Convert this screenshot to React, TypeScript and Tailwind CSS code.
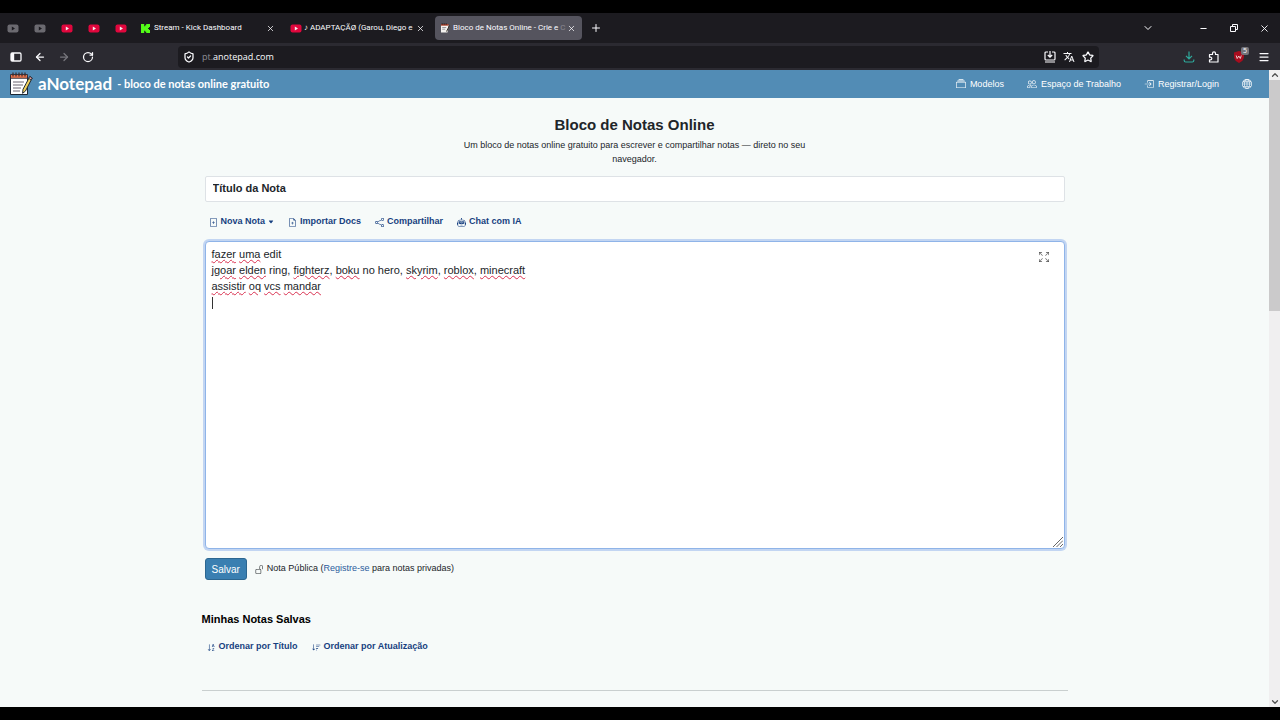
import type { ReactNode } from "react";
import {
  BsArrowsFullscreen,
  BsBoxArrowInRight,
  BsCaretDownFill,
  BsCollection,
  BsFileEarmarkPlus,
  BsFilePlus,
  BsGlobe,
  BsPeople,
  BsRobot,
  BsShare,
  BsSortAlphaDown,
  BsSortDown,
  BsUnlock,
} from "react-icons/bs";
import { MdTranslate } from "react-icons/md";
import {
  ArrowLeft,
  ArrowRight,
  ChevronDown,
  ChevronUp,
  Menu,
  Minus,
  Plus,
  RotateCw,
  ShieldCheck,
  Star,
  X,
} from "lucide-react";

type NoteWord = { text: string; misspelled?: boolean };

const bad = (text: string): NoteWord => ({ text, misspelled: true });
const ok = (text: string): NoteWord => ({ text });

const noteWords: NoteWord[] = [
  bad("fazer"), ok(" "), bad("uma"), ok(" edit\n"),
  bad("jgoar"), ok(" "), bad("elden"), ok(" ring, "), bad("fighterz"), ok(", "),
  bad("boku"), ok(" no hero, "), bad("skyrim"), ok(", "), bad("roblox"), ok(", "), bad("minecraft"), ok("\n"),
  bad("assistir"), ok(" "), bad("oq"), ok(" "), bad("vcs"), ok(" "), bad("mandar"), ok("\n"),
];

const noteText = noteWords.map((word) => word.text).join("");

const pinnedTabs = [
  { id: 1, color: "text-[#6b6a70]", arrow: "#1c1b20" },
  { id: 2, color: "text-[#6b6a70]", arrow: "#1c1b20" },
  { id: 3, color: "text-[#e0073d]" },
  { id: 4, color: "text-[#e0073d]" },
  { id: 5, color: "text-[#e0073d]" },
];

function YoutubeIcon({ className = "", arrow = "#f4e9ec" }: { className?: string; arrow?: string }) {
  return (
    <svg viewBox="0 0 12 9" className={`h-[9px] w-3 shrink-0 ${className}`} aria-hidden="true">
      <rect x=".5" y=".5" width="11" height="8" rx="2" fill="currentColor" />
      <path d="M4.8 2.6 8 4.5 4.8 6.4Z" fill={arrow} />
    </svg>
  );
}

function KickIcon() {
  return (
    <svg viewBox="0 0 9 9" className="size-[9px] shrink-0" aria-hidden="true">
      <path d="M0 0h3.2v2.200h1V1.200h1V0H9v3H8v1H7v1h1v1h1v3H5.200V7.800h-1v-1h-1V9H0Z" fill="#53fc18" />
    </svg>
  );
}

function NotepadIcon({ className = "" }: { className?: string }) {
  return (
    <svg viewBox="0 0 24 24" className={`shrink-0 ${className}`} aria-hidden="true">
      <path d="M1.500 4h17v18.500h-17Z" fill="#fff" stroke="#1d2733" strokeWidth="1" />
      <path d="M1.500 2.500h17v3.800h-17Z" fill="#e8754e" stroke="#1d2733" strokeWidth="0.800" />
      <path d="M4 .5v4M7 .5v4M10 .5v4M13 .5v4M16 .5v4" stroke="#3a2b2b" strokeWidth="1.200" />
      <path d="M4 10h11M4 13h10M4 16h8M4 19h7" stroke="#6b6570" strokeWidth="1.100" />
      <path d="m20.800 4.500 2.400 1.500-6.700 13-2.900 2.300.4-4Z" fill="#f3d25c" stroke="#1d2733" strokeWidth="1" />
      <path d="m20.800 4.500 2.400 1.500-1 1.900-2.500-1.500Z" fill="#e9a2a2" stroke="#1d2733" strokeWidth=".8" />
    </svg>
  );
}

function NotepadFavicon() {
  return (
    <svg viewBox="0 0 10 10" className="size-[10px] shrink-0" aria-hidden="true">
      <path d="M1 2h7.500L7.500 9.500H1Z" fill="#f5f3f0" />
      <path d="M1 1h7.500v1.700H1Z" fill="#a8432f" />
      <path d="M2.200 0v2M4.200 0v2M6.200 0v2" stroke="#2a1f1f" strokeWidth=".7" />
      <path d="M2.200 4.500h4M2.200 6.200h3" stroke="#77727a" strokeWidth=".7" />
      <path d="m9.500 2.500-3 6" stroke="#3a342a" strokeWidth="1" />
    </svg>
  );
}

function SidebarIcon() {
  return (
    <svg viewBox="0 0 12 10" className="h-[10px] w-3" aria-hidden="true">
      <rect x="1" y="1" width="10" height="8" rx="1.200" fill="none" stroke="currentColor" strokeWidth="1.300" />
      <path d="M1 1h3.200v8H1Z" fill="currentColor" />
    </svg>
  );
}

function InstallIcon() {
  return (
    <svg viewBox="0 0 12 12" className="size-3" fill="none" stroke="currentColor" strokeWidth="1.200" aria-hidden="true">
      <path d="M4 1H2a1 1 0 0 0-1 1v6a1 1 0 0 0 1 1h8a1 1 0 0 0 1-1V2a1 1 0 0 0-1-1H8M1 11h10M6 0v6M3.800 4 6 6.200 8.200 4" />
    </svg>
  );
}

function DownloadIcon() {
  return (
    <svg viewBox="0 0 12 12" className="size-3" fill="none" stroke="currentColor" strokeWidth="1.200" aria-hidden="true">
      <path d="M6 .5v7M3 4.800l3 3 3-3M1.200 8.500v1a1.500 1.500 0 0 0 1.500 1.500h6.600a1.500 1.500 0 0 0 1.500-1.500v-1" />
    </svg>
  );
}

function ExtensionIcon() {
  return (
    <svg viewBox="0 0 12 12" className="size-3" fill="none" stroke="currentColor" strokeWidth="1.200" strokeLinejoin="round" aria-hidden="true">
      <path d="M1.500 3.500h3V2.300a1.500 1.500 0 0 1 3 0v1.200h2.500v7.500h-8.500V8.800h1a1.300 1.300 0 0 0 0-2.600h-1Z" />
    </svg>
  );
}

function RestoreIcon() {
  return (
    <svg viewBox="0 0 8 8" className="size-2" fill="none" stroke="currentColor" aria-hidden="true">
      <path d="M.5 2.500h5v5h-5ZM2.500 2.500v-2h5v5h-2" />
    </svg>
  );
}

function ShieldBadgeIcon() {
  return (
    <svg viewBox="0 0 12 12" className="size-3" aria-hidden="true">
      <path d="M6 0 11 1.500v4C11 8.500 9 10.700 6 12 3 10.700 1 8.500 1 5.500v-4Z" fill="#a80d1e" />
      <path d="m3.200 4.500 1 3 1.600-2.500 1.500 2.500 1-3" fill="none" stroke="#f3dede" strokeWidth=".9" />
    </svg>
  );
}

function IconButton({ label, className = "", children }: { label: string; className?: string; children: ReactNode }) {
  return (
    <button type="button" aria-label={label} className={`flex shrink-0 items-center justify-center ${className}`}>
      {children}
    </button>
  );
}

function TabBar() {
  return (
    <div className="flex h-[30px] shrink-0 items-center bg-[#1c1b20] pl-[7px] font-[Roboto,'Noto_Sans',sans-serif] text-[8px] text-[#fbfbfe]">
      <div className="flex gap-[15px]">
        {pinnedTabs.map((tab) => (
          <IconButton key={tab.id} label="YouTube" className={tab.color}>
            <YoutubeIcon arrow={tab.arrow} />
          </IconButton>
        ))}
      </div>
      <div className="ml-[14px] flex w-[134px] items-center gap-1">
        <KickIcon />
        <span className="flex-1 whitespace-nowrap">Stream - Kick Dashboard</span>
        <IconButton label="Fechar aba"><X size={9} /></IconButton>
      </div>
      <div className="ml-[15px] flex w-[135px] items-center gap-[2px]">
        <YoutubeIcon className="text-[#e0073d]" />
        <span className="min-w-0 flex-1 whitespace-nowrap">♪ ADAPTAÇÃØ (Garou, Diego e</span>
        <IconButton label="Fechar aba"><X size={9} /></IconButton>
      </div>
      <div className="ml-[10px] flex h-6 w-[147px] items-center gap-[3px] rounded bg-[#55545e] pr-[6px] pl-[5px]">
        <NotepadFavicon />
        <span className="min-w-0 flex-1 whitespace-nowrap">
          Bloco de Notas Online - Crie e <span className="text-[#8a8992]">C</span>
        </span>
        <IconButton label="Fechar aba"><X size={9} /></IconButton>
      </div>
      <IconButton label="Nova aba" className="ml-2"><Plus size={12} /></IconButton>
      <div className="ml-auto flex items-center">
        <IconButton label="Listar abas" className="w-10"><ChevronDown size={12} /></IconButton>
        <IconButton label="Minimizar" className="ml-5 w-[30px]"><Minus size={9} strokeWidth={3} /></IconButton>
        <IconButton label="Restaurar" className="w-[31px]"><RestoreIcon /></IconButton>
        <IconButton label="Fechar" className="w-[31px]"><X size={11} /></IconButton>
      </div>
    </div>
  );
}

function Toolbar() {
  return (
    <div className="flex h-[27px] shrink-0 items-center bg-[#2b2a31] px-[10px] font-['Open_Sans','Noto_Sans',sans-serif] text-[9px] text-[#fbfbfe]">
      <div className="flex items-center gap-3">
        <IconButton label="Barra lateral"><SidebarIcon /></IconButton>
        <IconButton label="Voltar"><ArrowLeft size={12} strokeWidth={2.5} /></IconButton>
        <IconButton label="Avançar" className="text-[#77767d]"><ArrowRight size={12} strokeWidth={2.5} /></IconButton>
        <IconButton label="Recarregar"><RotateCw size={12} strokeWidth={2.5} /></IconButton>
      </div>
      <div className="ml-[84px] flex h-[22px] flex-1 items-center rounded bg-[#1c1b20] px-[5px]">
        <ShieldCheck size={12} strokeWidth={2.5} className="shrink-0" />
        <span className="ml-[7px] flex-1">
          <span className="text-[#8f8e96]">pt.</span>anotepad.com
        </span>
        <div className="flex items-center gap-[7px]">
          <IconButton label="Instalar"><InstallIcon /></IconButton>
          <IconButton label="Traduzir"><MdTranslate size={12} /></IconButton>
          <IconButton label="Favoritar"><Star size={12} strokeWidth={2.5} /></IconButton>
        </div>
      </div>
      <div className="ml-[84px] flex items-center gap-[13px]">
        <IconButton label="Downloads" className="text-[#2fa99c]"><DownloadIcon /></IconButton>
        <IconButton label="Extensões"><ExtensionIcon /></IconButton>
        <IconButton label="Bloqueador" className="relative">
          <ShieldBadgeIcon />
          <span className="absolute -top-1 -right-1 w-2 rounded-xs bg-[#75747a] text-[7px] leading-[8px]">5</span>
        </IconButton>
        <IconButton label="Menu"><Menu size={12} strokeWidth={2.5} /></IconButton>
      </div>
    </div>
  );
}

function SiteHeader() {
  return (
    <header className="flex h-7 items-center bg-[#528cb5] pr-[17px] pl-[9px] text-white">
      <a href="#" className="flex items-center gap-[5px] font-[Lato,sans-serif] font-bold">
        <NotepadIcon className="size-6" />
        <span className="text-[17px] leading-6">aNotepad</span>
        <span className="text-[11px] leading-6">- bloco de notas online gratuito</span>
      </a>
      <nav className="ml-auto flex items-center gap-[23px] text-[9px] leading-4">
        <a href="#" className="flex items-center gap-1"><BsCollection size={10} />Modelos</a>
        <a href="#" className="flex items-center gap-1"><BsPeople size={10} />Espaço de Trabalho</a>
        <a href="#" className="flex items-center gap-1"><BsBoxArrowInRight size={10} />Registrar/Login</a>
        <a href="#" aria-label="Idioma"><BsGlobe size={10} /></a>
      </nav>
    </header>
  );
}

function NoteEditor() {
  return (
    <div className="relative mt-[11px] h-[308px] rounded-[4px] border border-[#8fb4e8] bg-white ring-2 ring-[#c2d5f2]">
      {/* spelling marks and caret, drawn under the text */}
      <div aria-hidden="true" className="absolute inset-0 px-[6px] py-1 text-[11px] leading-4 whitespace-pre-wrap text-transparent">
        {noteWords.map((word, i) => (
          <span
            key={i}
            className={word.misspelled ? "underline decoration-[#d9304f] decoration-wavy decoration-1 underline-offset-1" : ""}
          >
            {word.text}
          </span>
        ))}
        <span className="inline-block h-3 w-px bg-[#333] align-middle" />
      </div>
      <textarea
        aria-label="Conteúdo da nota"
        spellCheck={false}
        defaultValue={noteText}
        className="relative block size-full resize-none bg-transparent px-[6px] py-1 text-[11px] leading-4 text-[#212529] outline-none"
      />
      <IconButton label="Tela cheia" className="absolute top-[10px] right-[15px] text-[#555]">
        <BsArrowsFullscreen size={10} />
      </IconButton>
      <svg viewBox="0 0 10 10" className="absolute right-px bottom-px size-[10px]" stroke="#555" strokeWidth=".9" aria-hidden="true">
        <path d="M0 10 10 0M3.500 10 10 3.500M7 10l3-3" />
      </svg>
    </div>
  );
}

function NotePage() {
  const action = "flex items-center gap-[3px]";

  return (
    <main className="mx-auto w-full max-w-[866px] text-[9px] text-[#212529]">
      <div className="pt-[19px] text-center">
        <h1 className="text-[15px] leading-4 font-bold">Bloco de Notas Online</h1>
        <p className="mx-auto mt-[5px] max-w-[380px] leading-[14px]">
          Um bloco de notas online gratuito para escrever e compartilhar notas — direto no seu navegador.
        </p>
      </div>
      <div className="px-[3px]">
        <input
          aria-label="Título da Nota"
          defaultValue="Título da Nota"
          className="mt-[10px] block h-[26px] w-full rounded-xs border border-[#dee2e6] bg-white px-[7px] pb-[2px] text-[11px] font-bold"
        />
        <div className="mt-3 flex h-4 items-center gap-[14px] px-1 font-bold text-[#163f80]">
          <button type="button" className={action}><BsFilePlus size={9} />Nova Nota<BsCaretDownFill size={6} /></button>
          <button type="button" className={action}><BsFileEarmarkPlus size={9} />Importar Docs</button>
          <button type="button" className={action}><BsShare size={9} />Compartilhar</button>
          <button type="button" className={action}><BsRobot size={9} />Chat com IA</button>
        </div>
        <NoteEditor />
        <div className="mt-[9px] flex items-center gap-2">
          <button type="button" className="h-[22px] rounded-[3px] border border-[#2c6690] bg-[#3a7fb1] px-[6px] text-[10px] text-white">Salvar</button>
          <span className="flex items-center gap-[3px]">
            <BsUnlock size={9} />
            <span>Nota Pública (<a href="#" className="text-[#2a5a9c]">Registre-se</a> para notas privadas)</span>
          </span>
        </div>
      </div>
      <h2 className="mt-[31px] text-[11px] leading-4 font-bold text-black">Minhas Notas Salvas</h2>
      <div className="mt-3 flex h-4 items-center gap-[14px] px-[5px] font-bold text-[#163f80]">
        <button type="button" className={action}><BsSortAlphaDown size={9} />Ordenar por Título</button>
        <button type="button" className={action}><BsSortDown size={9} />Ordenar por Atualização</button>
      </div>
      <hr className="mt-[35px] border-[#c9cfcf]" />
    </main>
  );
}

function Scrollbar() {
  return (
    <div className="flex w-[11px] shrink-0 flex-col items-center bg-[#f0eff0] text-[#505050]">
      <ChevronUp size={10} strokeWidth={3} className="shrink-0" />
      <div className="w-full flex-3 bg-[#cbcacb]" />
      <div className="w-full flex-5" />
      <ChevronDown size={10} strokeWidth={3} className="shrink-0" />
    </div>
  );
}

export default function App() {
  return (
    <div className="flex h-screen flex-col overflow-hidden bg-black py-[13px] font-['Liberation_Sans',Arial,sans-serif]">
      <TabBar />
      <Toolbar />
      <div className="flex min-h-0 flex-1">
        <div className="min-w-0 flex-1 overflow-hidden bg-[#f6faf9]">
          <SiteHeader />
          <NotePage />
        </div>
        <Scrollbar />
      </div>
    </div>
  );
}
